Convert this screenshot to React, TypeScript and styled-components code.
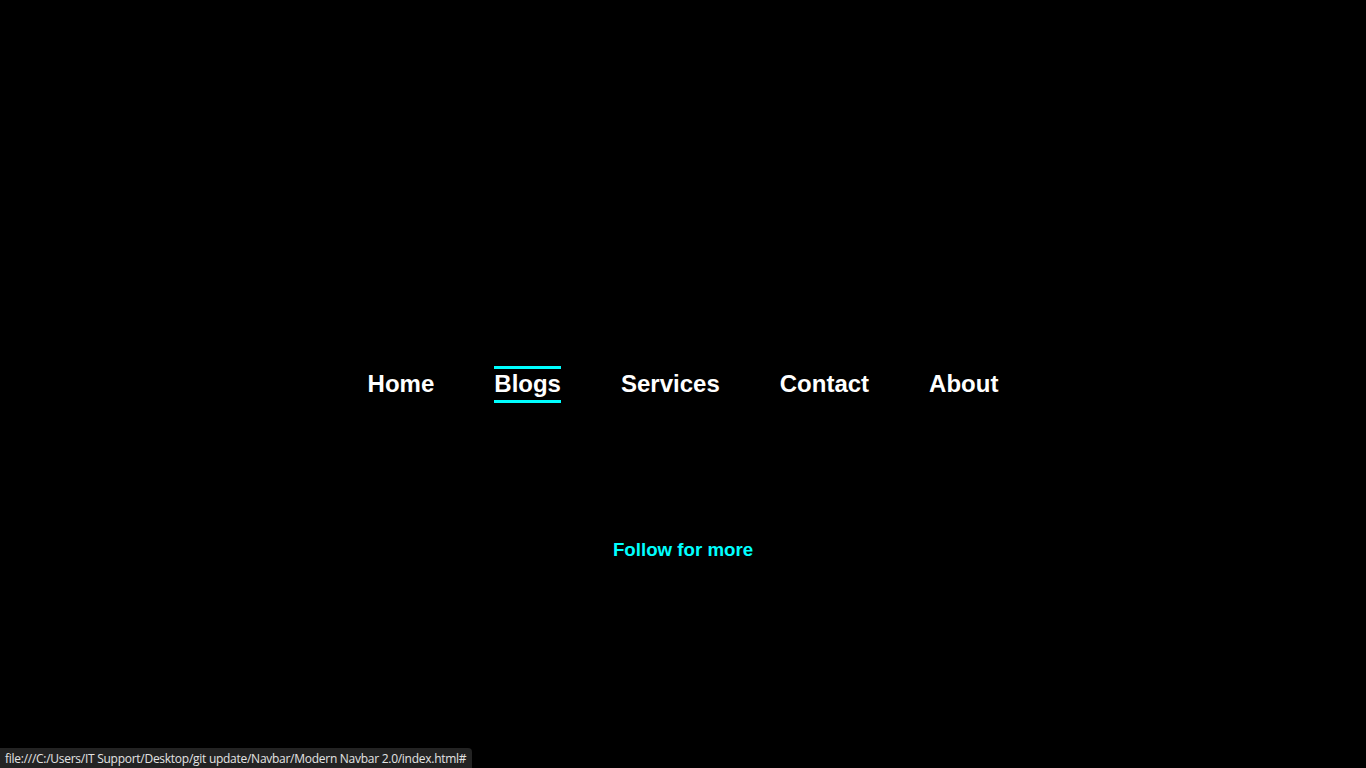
import React from "react";
import styled, { createGlobalStyle } from "styled-components";

const GlobalStyle = createGlobalStyle`
  html, body {
    margin: 0;
    padding: 0;
    background: #000;
  }
  * { box-sizing: border-box; }
`;

const Page = styled.main`
  height: 100vh;
  display: grid;
  grid-template-rows: 1fr auto 1fr;
  background: #000;
  font-family: "Liberation Sans", Arial, sans-serif;
`;

const Nav = styled.nav`
  grid-row: 2;
  display: flex;
  justify-content: center;
`;

const Menu = styled.ul`
  list-style: none;
  margin: 0;
  padding: 0;
  display: flex;
  gap: 60px;
`;

const Link = styled.a<{ $active?: boolean }>`
  display: block;
  height: 37px;
  line-height: 29px;
  padding-bottom: 2px;
  font-size: 24px;
  font-weight: 700;
  color: #fff;
  text-decoration: none;
  border-top: 3px solid ${(p) => (p.$active ? "#00ffff" : "transparent")};
  border-bottom: 3px solid ${(p) => (p.$active ? "#00ffff" : "transparent")};
`;

const Footer = styled.div`
  grid-row: 3;
  display: flex;
  justify-content: center;
  align-items: flex-start;
  padding-top: 136px;
`;

const Follow = styled.a`
  font-size: 18.7px;
  font-weight: 700;
  color: #00ffff;
  text-decoration: none;
`;

const StatusBubble = styled.div`
  position: fixed;
  left: 0;
  bottom: 0;
  height: 20px;
  padding: 0 6px 0 5px;
  display: flex;
  align-items: center;
  background: #232323;
  border-top-right-radius: 4px;
  color: #e3e3e3;
  font-family: "Open Sans", "Noto Sans", sans-serif;
  font-size: 12px;
  letter-spacing: -0.27px;
  white-space: nowrap;
`;

const items = ["Home", "Blogs", "Services", "Contact", "About"];

export default function App() {
  return (
    <>
      <GlobalStyle />
      <Page>
        <Nav>
          <Menu>
            {items.map((it) => (
              <li key={it}>
                <Link href="#" $active={it === "Blogs"}>
                  {it}
                </Link>
              </li>
            ))}
          </Menu>
        </Nav>
        <Footer>
          <Follow href="#">Follow for more</Follow>
        </Footer>
      </Page>
      <StatusBubble>file:///C:/Users/IT Support/Desktop/git update/Navbar/Modern Navbar 2.0/index.html#</StatusBubble>
    </>
  );
}
